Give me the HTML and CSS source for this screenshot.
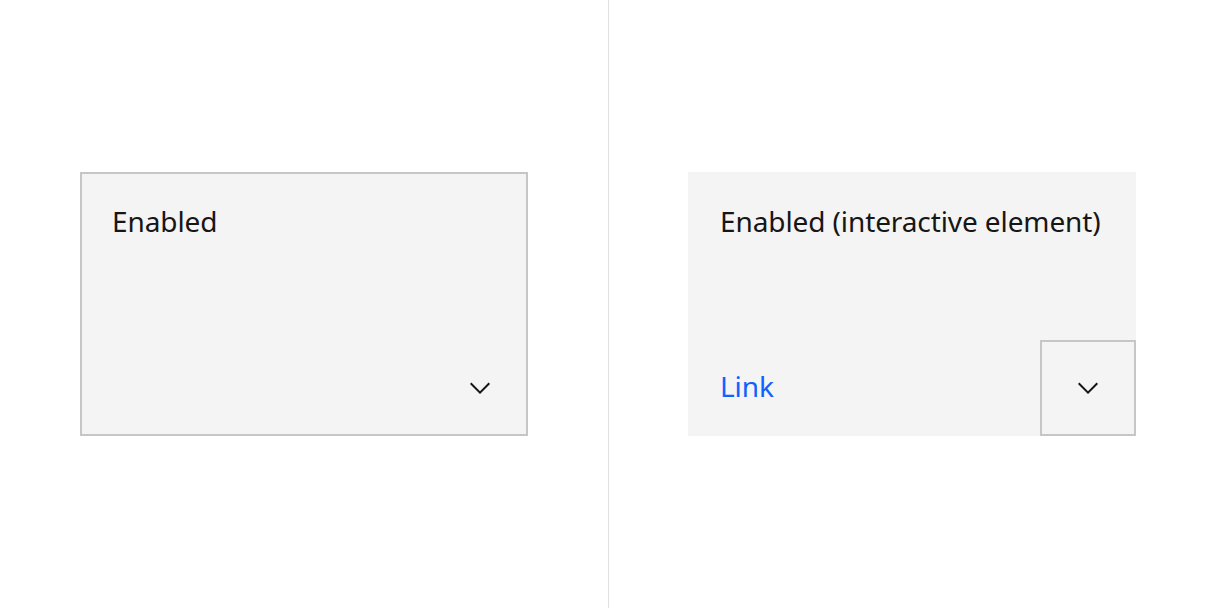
FILE: index.html
```html
<!DOCTYPE html>
<html lang="en">
<head>
    <meta charset="UTF-8">
    <meta name="viewport" content="width=device-width, initial-scale=1.0">
    <title>Expandable tile</title>
    <link rel="stylesheet" href="styles.css">
</head>
<body>
    <div class="board">
        <!-- Plain expandable tile -->
        <section class="panel">
            <div class="tile tile-bordered">
                <p class="tile-title">Enabled</p>
                <div class="tile-foot">
                    <svg class="chevron" viewBox="0 0 16 16" width="32" height="32" aria-hidden="true">
                        <path d="M8 11L3 6 3.7 5.3 8 9.6 12.3 5.3 13 6z"></path>
                    </svg>
                </div>
            </div>
        </section>

        <!-- Tile with an interactive element -->
        <section class="panel">
            <div class="tile tile-interactive">
                <p class="tile-title">Enabled (interactive element)</p>
                <div class="tile-foot tile-foot-flush">
                    <a href="#" class="tile-link">Link</a>
                    <button class="expand-button" aria-label="Expand">
                        <svg class="chevron" viewBox="0 0 16 16" width="32" height="32" aria-hidden="true">
                            <path d="M8 11L3 6 3.7 5.3 8 9.6 12.3 5.3 13 6z"></path>
                        </svg>
                    </button>
                </div>
            </div>
        </section>
    </div>
</body>
</html>
```

FILE: styles.css
```css
body {
    margin: 0;
    font-family: "Noto Sans", Arial, sans-serif;
    color: #161616;
    background-color: #ffffff;
}

.board {
    display: grid;
    grid-template-columns: 608px 1px 607px;
    height: 608px;
}

.board::before {
    content: "";
    grid-column: 2;
    grid-row: 1;
    background-color: #e0e0e0;
}

.panel {
    display: flex;
    align-items: center;
    justify-content: center;
}

.panel:first-child {
    grid-column: 1;
    grid-row: 1;
}

.panel:last-child {
    grid-column: 3;
    grid-row: 1;
    justify-content: flex-start;
    padding-left: 79px;
}

/* Tile */
.tile {
    box-sizing: border-box;
    width: 448px;
    height: 264px;
    padding: 31px 32px 0 32px;
    background-color: #f4f4f4;
    display: flex;
    flex-direction: column;
}

.tile-bordered {
    box-shadow: inset 0 0 0 2px #c6c6c6;
    padding-bottom: 32px;
}

.tile-title {
    margin: 0;
    font-size: 28px;
    line-height: 36px;
    font-weight: 400;
    letter-spacing: -0.1px;
}

.tile-foot {
    margin-top: auto;
    display: flex;
    justify-content: flex-end;
    align-items: center;
}

.chevron {
    display: block;
    fill: #161616;
}

/* Link row sits flush with the bottom-right corner */
.tile-foot-flush {
    justify-content: space-between;
    margin-right: -32px;
}

.tile-link {
    font-size: 28px;
    line-height: 36px;
    color: #0f62fe;
    text-decoration: none;
    letter-spacing: -0.1px;
    padding-bottom: 4px;
}

.expand-button {
    box-sizing: border-box;
    width: 96px;
    height: 96px;
    padding: 0;
    margin: 0;
    border: 2px solid #c6c6c6;
    background-color: #f4f4f4;
    display: flex;
    align-items: center;
    justify-content: center;
    cursor: pointer;
}
```
